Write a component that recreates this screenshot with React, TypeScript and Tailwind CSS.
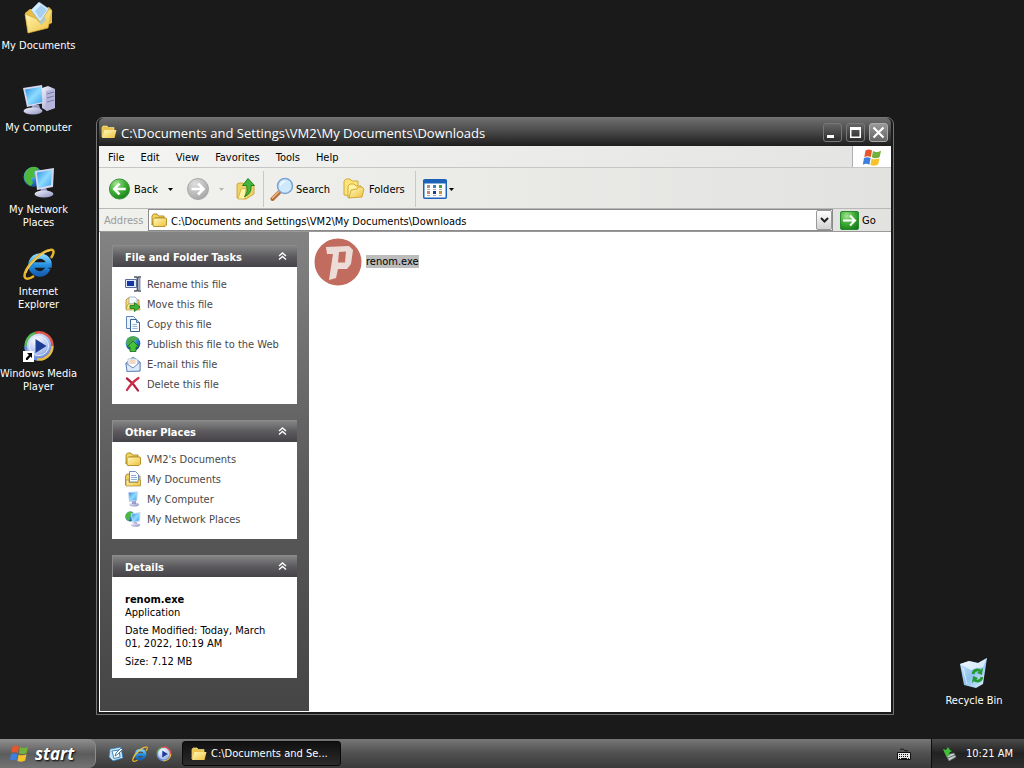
import type { ReactNode } from "react";

type IconProps = { className?: string };

type Item = {
  label: string;
  icon: ReactNode;
};

/* Gradients shared by all icons */
function IconDefs() {
  return (
    <svg className="absolute h-0 w-0" aria-hidden="true">
      <defs>
        <linearGradient id="folder" x1="0" y1="0" x2="1" y2="1">
          <stop offset="0" stopColor="#fffbc0" />
          <stop offset="1" stopColor="#eec03a" />
        </linearGradient>
        <linearGradient id="screen" x1="0" y1="0" x2="1" y2="1">
          <stop offset="0" stopColor="#2a8fe8" />
          <stop offset="0.5" stopColor="#8fdcff" />
          <stop offset="1" stopColor="#3aa0ec" />
        </linearGradient>
        <linearGradient id="metal" x1="0" y1="0" x2="1" y2="1">
          <stop offset="0" stopColor="#f4f4ff" />
          <stop offset="1" stopColor="#8d8fbe" />
        </linearGradient>
        <radialGradient id="globe" cx="0.35" cy="0.3" r="0.8">
          <stop offset="0" stopColor="#9be8ff" />
          <stop offset="0.5" stopColor="#2f86d8" />
          <stop offset="1" stopColor="#0d3c86" />
        </radialGradient>
        <radialGradient id="green" cx="0.35" cy="0.25" r="0.85">
          <stop offset="0" stopColor="#a4e693" />
          <stop offset="0.5" stopColor="#3fae35" />
          <stop offset="1" stopColor="#157a18" />
        </radialGradient>
        <radialGradient id="gray" cx="0.35" cy="0.25" r="0.85">
          <stop offset="0" stopColor="#dedede" />
          <stop offset="1" stopColor="#a2a2a2" />
        </radialGradient>
        <linearGradient id="ie" x1="0" y1="0" x2="0" y2="1">
          <stop offset="0" stopColor="#7fd4ff" />
          <stop offset="0.5" stopColor="#2590e0" />
          <stop offset="1" stopColor="#1762b8" />
        </linearGradient>
        <radialGradient id="disc" cx="0.4" cy="0.3" r="0.8">
          <stop offset="0" stopColor="#ffffff" />
          <stop offset="0.6" stopColor="#a9c0f0" />
          <stop offset="1" stopColor="#4a68c0" />
        </radialGradient>
        <linearGradient id="bin" x1="0" y1="0" x2="1" y2="1">
          <stop offset="0" stopColor="#cfeaff" />
          <stop offset="0.5" stopColor="#8fc2ef" />
          <stop offset="1" stopColor="#e4f5ff" />
        </linearGradient>
      </defs>
    </svg>
  );
}

function FolderIcon({ className = "h-4 w-4" }: IconProps) {
  return (
    <svg viewBox="0 0 16 16" className={className}>
      <path d="M1 13V4l1.5-2H6l1.5 2H13v2H4z" fill="#f2d560" stroke="#a98518" strokeWidth=".9" />
      <path d="M2 14V7.5L3.5 6H15l.5 1v6L14 14.5H3z" fill="url(#folder)" stroke="#b08a1c" strokeWidth=".9" />
    </svg>
  );
}

function OpenFolderIcon({ className = "h-4 w-4" }: IconProps) {
  return (
    <svg viewBox="0 0 16 14" className={className}>
      <path d="M1 12V2.500L2 1h4l1.500 1.500H13V6H4z" fill="#e9c34c" stroke="#f7e28c" strokeWidth=".7" />
      <path d="M1 13 3.500 5H15.500L13.500 13z" fill="url(#folder)" />
    </svg>
  );
}

function DocumentsIcon({ className = "h-8 w-8" }: IconProps) {
  return (
    <svg viewBox="0 0 32 32" className={className}>
      <path d="M2 11 7 7h5l2 3 12-5 3 3v13L5 31z" fill="#e8bd45" />
      <path d="M8 8 16 0l10 7-8 14z" fill="#d9edfb" stroke="#86b4dc" strokeWidth=".7" />
      <path d="m12 9 6-6 6 5-7 9z" fill="#8fc3ec" opacity=".7" />
      <path d="M2 12 14 17l2 3 2-1 8-12 3 2-4 17L5 31z" fill="url(#folder)" stroke="#d9a92e" strokeWidth=".7" />
      <path d="m16 20 2-1 3-5 2 4-5 5z" fill="#8fc3ec" opacity=".7" />
    </svg>
  );
}

function ComputerIcon({ className = "h-8 w-8" }: IconProps) {
  return (
    <svg viewBox="0 0 32 32" className={className}>
      <path d="m19 4 6-2 7 3v19l-8 3-5-3z" fill="url(#metal)" />
      <path d="M23 7v20l9-3V5z" fill="#b4b5d8" />
      <path d="m24 10 7-2M24 14l7-2M24 18l7-2" stroke="#777aa8" strokeWidth="1" />
      <path d="M9 21h7l2 6H8z" fill="#9a9cc6" />
      <ellipse cx="10" cy="27" rx="9.500" ry="3.500" fill="url(#metal)" />
      <path d="m0 4 19-3 2 18-17 4z" fill="#d4d8f0" />
      <path d="m2 5.500 16-2.500 1.500 15L5.500 21z" fill="url(#screen)" />
    </svg>
  );
}

function NetworkIcon({ className = "h-8 w-8" }: IconProps) {
  return (
    <svg viewBox="0 0 32 32" className={className}>
      <circle cx="10.500" cy="11" r="10" fill="url(#globe)" />
      <path d="M4 4c4-4 9-4 12-1l-5 3 1 5-4 1 2 5-2 3C1 17-1 10 4 4z" fill="#4db83c" />
      <path d="M18 22h5l3 6h-9z" fill="#9a9cc6" />
      <ellipse cx="21" cy="28" rx="9.500" ry="3.500" fill="url(#metal)" />
      <path d="m12 5 19-3-1 19-16 3z" fill="#d4d8f0" />
      <path d="m14 6.500 15-2.500-1 15-12.500 3z" fill="url(#screen)" />
    </svg>
  );
}

function ExplorerIcon({ className = "h-8 w-8" }: IconProps) {
  return (
    <svg viewBox="0 0 32 32" className={className} fill="none">
      <path d="M25 20c-2 4-4 6-8 6-5 0-9-4-9-9s4-9 9-9 9 4 9 8v1H11" stroke="url(#ie)" strokeWidth="5.500" />
      <path d="M28 10c4-6 3-9-1-8C19 3 5 16 2 25c-2 7 3 7 9 3" stroke="#e7b52c" strokeWidth="2.500" />
      <path d="M27 2.500C19 4 6 16 3 25" stroke="#fbe58b" strokeWidth=".8" />
    </svg>
  );
}

function MediaIcon({ className = "h-8 w-8" }: IconProps) {
  return (
    <svg viewBox="0 0 32 32" className={className} fill="none">
      <circle cx="16" cy="16" r="13" fill="url(#disc)" />
      <path d="M2.500 16A13.500 13.500 0 0 1 12 3" stroke="#58b958" strokeWidth="2.500" />
      <path d="M12 3A13.500 13.500 0 0 1 29.500 16" stroke="#e0564a" strokeWidth="2.500" />
      <path d="M29.500 16A13.500 13.500 0 0 1 14 29.400" stroke="#e8bd45" strokeWidth="2.500" />
      <path d="M14 29.400A13.500 13.500 0 0 1 2.500 16" stroke="#6d92e0" strokeWidth="2.500" />
      <circle cx="16" cy="16" r="9.500" stroke="#e9f1ff" />
      <path d="M12.500 9v14l11-7z" fill="#1c3d94" />
    </svg>
  );
}

function ShortcutIcon({ className = "h-8 w-8" }: IconProps) {
  return (
    <span className="relative block">
      <MediaIcon className={className} />
      <svg viewBox="0 0 11 11" className="absolute bottom-0 left-0 h-[11px] w-[11px]">
        <path d="M0 0h11v11H0z" fill="#fff" />
        <path d="M4 2h5v5L7.500 5.500 4.500 9H3V7l3-3z" fill="#000" />
      </svg>
    </span>
  );
}

function RecycleIcon({ className = "h-8 w-8" }: IconProps) {
  return (
    <svg viewBox="0 0 32 32" className={className}>
      <path d="m2 7 9-3 9 2 9-5-4 26-7 4-12-3z" fill="url(#bin)" />
      <path d="m2 7 9-3 9 2 9-5-4 9-12 3z" fill="#fff" opacity=".65" />
      <path d="m5 11 4 16" stroke="#fff" opacity=".6" />
      <g fill="none" stroke="#249a32" strokeWidth="2.800">
        <path d="M15 17c1-5 6-5 8-2" />
        <path d="M24 20c-1 5-6 5-8 2" />
      </g>
      <path d="m25 11-1 7-5-2zM14 26l1-7 5 2z" fill="#249a32" />
    </svg>
  );
}

function WindowsLogo({ className = "h-5 w-5" }: IconProps) {
  return (
    <svg viewBox="0 0 20 20" className={className}>
      <path d="M3.500 2.500C6 1 8 1.300 10 2.500L8.800 9C6.500 7.800 4.500 8 2.300 9z" fill="#e5562d" />
      <path d="M11 3c2.500 1.300 5 1.300 8-.3L17.700 9c-2.500 1.500-5 1.500-7.900.3z" fill="#73b13a" />
      <path d="M2 10c2.500-1.300 4.500-1 6.600.1l-1.200 6.600c-2.300-1.200-4.300-1-6.600 0z" fill="#3d7fdc" />
      <path d="M9.600 10.400c2.500 1.200 5 1.200 7.900-.2l-1.300 6.400c-2.600 1.500-5 1.400-7.800.3z" fill="#f6c22c" />
    </svg>
  );
}

function ArrowCircle({ kind }: { kind: "back" | "forward" }) {
  return (
    <svg viewBox="0 0 24 24" className="h-6 w-6" fill="none">
      <circle
        cx="12"
        cy="12"
        r="10.500"
        fill={kind === "back" ? "url(#green)" : "url(#gray)"}
        stroke={kind === "back" ? "#33913a" : "#a8a8a8"}
      />
      <path
        d={kind === "back" ? "M18.500 12H7M12 6.500 6.500 12l5.500 5.500" : "M5.500 12H17M12 6.500l5.500 5.500-5.500 5.500"}
        stroke="#fff"
        strokeWidth="2.600"
      />
    </svg>
  );
}

function UpIcon() {
  return (
    <svg viewBox="0 0 22 24" className="h-6 w-[22px]">
      <path d="M2 21V7l2-1h4l2 2h9v9l-8 5z" fill="#efd365" stroke="#c49d2b" strokeWidth=".8" />
      <path d="M3 22 6 12l5-1-1 11z" fill="#fff4a8" stroke="#d1a935" strokeWidth=".8" />
      <path d="M13 1.500 19.500 8.500H16c.5 6-1.500 9-6.500 11 3-4 3-6 2-11H7.500z" fill="#46b43a" stroke="#1d7c1d" strokeWidth=".9" />
    </svg>
  );
}

function SearchIcon() {
  return (
    <svg viewBox="0 0 24 24" className="h-6 w-6">
      <path d="m2.500 22 8-8" stroke="#b5703a" strokeWidth="4" strokeLinecap="round" />
      <path d="m2.500 21 7.500-7.500" stroke="#eab98a" strokeWidth="1.500" strokeLinecap="round" />
      <circle cx="15" cy="9" r="7.500" fill="#cfe9fc" stroke="#7da4d4" strokeWidth="1.600" />
      <path d="M10 9c0-4 3-5.500 6-5-3 1-4 3-6 5z" fill="#fff" />
    </svg>
  );
}

function FoldersIcon() {
  return (
    <svg viewBox="0 0 24 22" className="h-[22px] w-6" stroke="#cda22b" strokeWidth=".9">
      <path d="M2 17V3l2-2h4l2 2h6v4L8 18z" fill="#fbe57a" />
      <path d="M6 20V8l2-2h4l2 2h5v4z" fill="#fff3a4" />
      <path d="m7 20 2-8 6-1 1-2h4l2 2-2 8z" fill="url(#folder)" />
    </svg>
  );
}

function ViewsIcon() {
  return (
    <svg viewBox="0 0 24 20" className="h-5 w-6">
      <rect x=".75" y=".75" width="22.500" height="18.500" rx="1" fill="#fff" stroke="#1c62b8" strokeWidth="1.500" />
      <path d="M0 1h24v3.500H0z" fill="#1c62b8" />
      <g>
        <path d="M4 6h3v3H4z" fill="#a89088" />
        <path d="M10 6h3v3h-3z" fill="#3e84b4" />
        <path d="M16 6h3v3h-3z" fill="#3ea040" />
        <path d="M4 12h3v3H4z" fill="#d0806c" />
        <path d="M10 12h3v3h-3z" fill="#1c3d94" />
        <path d="M16 12h3v3h-3z" fill="#c29335" />
      </g>
      <path d="M4 10.500h3m3 0h3m3 0h3M4 16.500h3m3 0h3m3 0h3" stroke="#aaa" />
    </svg>
  );
}

function Caret({ className = "fill-black" }: IconProps) {
  return (
    <svg viewBox="0 0 5 3" className={`h-[3px] w-[5px] ${className}`}>
      <path d="M0 0h5L2.500 3z" />
    </svg>
  );
}

function RenameIcon() {
  return (
    <svg viewBox="0 0 16 16" className="h-4 w-4">
      <path d="M.5 3.500h11v8H.5z" fill="#dfe8f8" stroke="#5a6f9c" />
      <path d="M2 5h7v5H2z" fill="#1535a0" />
      <path d="M14.500 2v12" stroke="#8d9ab0" strokeWidth="2" />
      <path d="M9 1h2.500l1 1 1-1H16M12.500 2v12M9 15h2.500l1-1 1 1H16" fill="none" stroke="#4c5668" strokeWidth="1.600" />
    </svg>
  );
}

function MoveIcon() {
  return (
    <svg viewBox="0 0 16 16" className="h-4 w-4">
      <path d="M1 13V4l2-2h4l1 2h6v9z" fill="#f4dc7a" stroke="#a8882c" strokeWidth=".8" />
      <path d="M4 1h6l2 2v5H4z" fill="#f5f9ff" stroke="#8aa0bc" strokeWidth=".7" />
      <path d="M1 14 3 8h11l1 6z" fill="url(#folder)" stroke="#a8882c" strokeWidth=".6" />
      <path d="M5 9.500h4.500V6.500L15 11l-5.500 4.500v-3H5z" fill="#3eb232" stroke="#157516" strokeWidth=".8" />
    </svg>
  );
}

function CopyIcon() {
  return (
    <svg viewBox="0 0 16 16" className="h-4 w-4">
      <path d="M1.500.5h7l2 2v10h-9z" fill="#e8f2fc" stroke="#5f86b4" />
      <path d="M5.500 3.500h6l3 3v9h-9z" fill="#f8fbff" stroke="#35618f" />
      <path d="M11.500 3.500v3h3" fill="#bcd4ee" stroke="#35618f" strokeWidth=".8" />
      <path d="M7.500 8.500H12M7.500 10.500h5M7.500 12.500h5" stroke="#94b4d8" />
    </svg>
  );
}

function PublishIcon() {
  return (
    <svg viewBox="0 0 16 16" className="h-4 w-4">
      <circle cx="8" cy="7.500" r="7.300" fill="url(#globe)" />
      <path d="M2 3c4-4 9-3 12 0l-4 1-1 3H5L4 10 1 8z" fill="#4aa84e" />
      <path d="m8 5 6 6h-3v4.500H5V11H2z" fill="#45c235" stroke="#146a18" strokeWidth=".8" />
    </svg>
  );
}

function EmailIcon() {
  return (
    <svg viewBox="0 0 16 16" className="h-4 w-4">
      <path d="M1 7 8 1l7 5v9l-13 .500z" fill="#bed4ef" stroke="#6485b4" strokeWidth=".9" />
      <path d="M3 3h9l1 6-5 3-5-3z" fill="#fff" stroke="#a8b4c8" strokeWidth=".7" />
      <path d="M4.500 5h6M4.500 7h6" stroke="#e3a17c" strokeWidth=".9" />
      <path d="m1 7 7 5 7-6v9l-13 .500z" fill="#dbe9f9" stroke="#6485b4" strokeWidth=".9" />
    </svg>
  );
}

function DeleteIcon() {
  return (
    <svg viewBox="0 0 16 16" className="h-4 w-4" fill="none" strokeLinecap="round">
      <path d="M2 2.500c4 3 8 7 11 12" stroke="#b81c3c" strokeWidth="2.200" />
      <path d="M13.500 2C9 5 5 9 2 14" stroke="#d22c4c" strokeWidth="2.200" />
    </svg>
  );
}

function DocFolderIcon() {
  return (
    <svg viewBox="0 0 16 16" className="h-4 w-4">
      <path d="M.5 14V5L2 3h3l1 2h9v9z" fill="#f0d060" stroke="#a8882c" strokeWidth=".9" />
      <path d="M4.500.5h6l3 3V11h-9z" fill="#f8fbff" stroke="#6485b4" strokeWidth=".9" />
      <path d="M6 4.500h5M6 6.500h6M6 8.500h6" stroke="#8cb0dc" />
      <path d="M1 15V9h3v2.500h9V9h2.500v6z" fill="url(#folder)" stroke="#a8882c" strokeWidth=".7" />
    </svg>
  );
}

function SmallComputerIcon() {
  return (
    <svg viewBox="0 0 16 16" className="h-4 w-4">
      <ellipse cx="9" cy="13.500" rx="5" ry="2" fill="url(#metal)" />
      <path d="M7 10h4v3H7z" fill="#9a9cc6" />
      <path d="m3 1 10-.500L12 10l-8 1z" fill="#c4cdec" />
      <path d="m4 2 8-.500L11.200 9l-6.400.8z" fill="url(#screen)" />
    </svg>
  );
}

function DesktopLaunchIcon() {
  return (
    <svg viewBox="0 0 16 16" className="h-4 w-4">
      <path d="m2 3 11-2 2 11-10 3-4-4z" fill="#c4e4f6" stroke="#2f78ac" strokeWidth=".8" />
      <path d="m4 5 7-1 1 7-6 1.500z" fill="#fff" stroke="#3d86bc" />
      <path d="m7 10 1-3 5-5 1.500 1.500-5 5z" fill="#f5fbff" stroke="#28618f" strokeWidth=".8" />
    </svg>
  );
}

function KeyboardIcon() {
  return (
    <svg viewBox="0 0 16 14" className="h-[14px] w-4">
      <path d="M4 2c2 1 3-1 4 1s3 0 4 1" fill="none" stroke="#111" />
      <path d="M1.500 5.500h13v7h-13z" fill="#e8e8e8" stroke="#111" />
      <path d="M3 7.500h10M3 9.500h10" stroke="#111" strokeDasharray="1 1" />
      <path d="M3 11.500h1m1 0h6m1 0h1" stroke="#111" />
    </svg>
  );
}

function TrayIcon() {
  return (
    <svg viewBox="0 0 16 16" className="h-4 w-4">
      <path d="m4 9 8-2 2 4-7 4z" fill="#c8cfd0" stroke="#5d6a68" strokeWidth=".8" />
      <path d="m6 12 7-3" stroke="#5c6866" />
      <path d="m1 3 3 1 2-3 2 3 2 1-3 2 1 2-3 2-2-3z" fill="#41bd3b" />
    </svg>
  );
}

function AppIcon() {
  return (
    <svg viewBox="0 0 48 48" className="h-12 w-12">
      <circle cx="24" cy="24" r="23.500" fill="#c26c60" />
      <path d="M12 9 35 8l4 4-2 14-4 5h-9l-2 9-7 2 4-26h-6z" fill="#ecdcd8" />
      <path d="m25 14 7-.500-1 11h-7z" fill="#c26c60" />
    </svg>
  );
}

function DesktopItem({ label, icon }: Item) {
  return (
    <button className="flex h-[82px] w-full flex-col items-center gap-[5px] whitespace-pre text-center text-white">
      {icon}
      <span>{label}</span>
    </button>
  );
}

function Panel({ title, children }: { title: string; children: ReactNode }) {
  return (
    <section className="bg-white">
      <button className="flex h-[22px] w-full items-center justify-between border-l border-t border-[#8b8b8b] bg-linear-to-b from-[#858585] via-[#5c5a5e] to-[#454347] pl-3 pr-2.5 pt-px font-bold text-white">
        <span>{title}</span>
        <svg viewBox="0 0 9 8" className="mb-0.5 h-2 w-[9px]" fill="none" stroke="#fff" strokeWidth="1.400">
          <path d="m1 4 3.500-3L8 4M1 7.500l3.500-3 3.500 3" />
        </svg>
      </button>
      {children}
    </section>
  );
}

function LinkList({ items }: { items: Item[] }) {
  return (
    <ul className="px-[13px] pb-2.5 pt-[7px]">
      {items.map((item) => (
        <li key={item.label}>
          <a href="#" className="flex h-5 items-center gap-1.5 whitespace-nowrap text-[#484848]">
            {item.icon}
            {item.label}
          </a>
        </li>
      ))}
    </ul>
  );
}

const DESKTOP_ITEMS: Item[] = [
  { label: "My Documents", icon: <DocumentsIcon /> },
  { label: "My Computer", icon: <ComputerIcon /> },
  { label: "My Network\nPlaces", icon: <NetworkIcon /> },
  { label: "Internet\nExplorer", icon: <ExplorerIcon /> },
  { label: "Windows Media\nPlayer", icon: <ShortcutIcon /> },
];

const MENUS = ["File", "Edit", "View", "Favorites", "Tools", "Help"];

const FILE_TASKS: Item[] = [
  { label: "Rename this file", icon: <RenameIcon /> },
  { label: "Move this file", icon: <MoveIcon /> },
  { label: "Copy this file", icon: <CopyIcon /> },
  { label: "Publish this file to the Web", icon: <PublishIcon /> },
  { label: "E-mail this file", icon: <EmailIcon /> },
  { label: "Delete this file", icon: <DeleteIcon /> },
];

const PLACES: Item[] = [
  { label: "VM2's Documents", icon: <FolderIcon /> },
  { label: "My Documents", icon: <DocFolderIcon /> },
  { label: "My Computer", icon: <SmallComputerIcon /> },
  { label: "My Network Places", icon: <NetworkIcon className="h-4 w-4" /> },
];

const PATH = "C:\\Documents and Settings\\VM2\\My Documents\\Downloads";

const TITLE_BUTTON =
  "flex h-[19px] w-[19px] items-center justify-center rounded-[3px] border border-[#777] bg-linear-to-b from-[#666] to-[#2c2c2c]";

function TitleBar() {
  return (
    <header className="flex h-7 items-center gap-1 rounded-t-[5px] bg-linear-to-b from-[#6e6e6e] via-[#484848] to-[#1e1e1e] pl-0.5 pr-[3px]">
      <OpenFolderIcon />
      <h1 className="min-w-0 flex-1 truncate pt-px font-['Open_Sans','Noto_Sans',sans-serif] text-[13px] font-medium leading-5 text-white">
        {PATH}
      </h1>
      <div className="flex gap-1">
        <button aria-label="Minimize" className={TITLE_BUTTON}>
          <svg viewBox="0 0 13 13" className="h-[13px] w-[13px]">
            <path d="M1 9h7v3H1z" fill="#fff" />
          </svg>
        </button>
        <button aria-label="Maximize" className={TITLE_BUTTON}>
          <svg viewBox="0 0 13 13" className="h-[13px] w-[13px]">
            <path d="M1 1h11v11H1zM2.500 4v6.500h8V4z" fill="#fff" fillRule="evenodd" />
          </svg>
        </button>
        <button
          aria-label="Close"
          className="flex h-[19px] w-[19px] items-center justify-center rounded-[3px] border border-[#aaa] bg-linear-to-b from-[#999] to-[#666]"
        >
          <svg viewBox="0 0 13 13" className="h-[13px] w-[13px]">
            <path d="m1.500 1.500 10 10m0-10-10 10" stroke="#fff" strokeWidth="2.200" />
          </svg>
        </button>
      </div>
    </header>
  );
}

function Toolbar() {
  return (
    <div className="flex h-[41px] items-center border-b border-[#b8b8b6] bg-linear-to-r from-[#f2f2ef] to-[#e2e2e0] pl-[9px] pt-0.5">
      <button className="flex w-[50px] items-center gap-[3px]">
        <ArrowCircle kind="back" />
        Back
      </button>
      <button aria-label="Back history" className="flex h-6 w-7 items-center justify-center pr-1">
        <Caret />
      </button>
      <button aria-label="Forward" disabled>
        <ArrowCircle kind="forward" />
      </button>
      <button aria-label="Forward history" disabled className="flex h-6 w-[25px] items-center justify-center pr-0.5">
        <Caret className="fill-[#b5b5b5]" />
      </button>
      <button aria-label="Up">
        <UpIcon />
      </button>
      <span className="ml-1.5 h-9 w-px bg-[#c8c8c6]" />
      <button className="ml-1.5 flex w-[68px] items-center gap-0.5">
        <SearchIcon />
        Search
      </button>
      <button className="ml-1 flex w-[67px] items-center gap-[3px]">
        <FoldersIcon />
        Folders
      </button>
      <span className="ml-1.5 h-9 w-px bg-[#c8c8c6]" />
      <button aria-label="Views" className="ml-[7px] flex items-center gap-0.5">
        <ViewsIcon />
        <Caret />
      </button>
    </div>
  );
}

function AddressBar() {
  return (
    <form
      className="flex h-[23px] items-center border-b border-[#999] bg-linear-to-r from-[#f0f0ed] to-[#e2e2e0] pl-[5px]"
      onSubmit={(e) => e.preventDefault()}
    >
      <label htmlFor="address" className="w-11 pt-px text-[#9b9b99]">
        Address
      </label>
      <div className="flex h-[22px] min-w-0 flex-1 items-center gap-1 border border-[#8a8a8a] bg-white pl-0.5">
        <FolderIcon />
        <input id="address" defaultValue={PATH} className="min-w-0 flex-1 bg-transparent pt-0.5 outline-none" />
        <button
          type="button"
          aria-label="Show addresses"
          className="flex h-5 w-4 items-center justify-center rounded-[2px] border border-[#999] bg-linear-to-b from-white to-[#d2d2d2]"
        >
          <svg viewBox="0 0 9 6" className="h-1.5 w-[9px]" fill="none" stroke="#222" strokeWidth="2">
            <path d="m1 1 3.500 3.500L8 1" />
          </svg>
        </button>
      </div>
      <button className="ml-[7px] flex w-[51px] items-center gap-[3px] pt-px">
        <svg viewBox="0 0 19 19" className="h-[19px] w-[19px]">
          <rect x=".5" y=".5" width="18" height="18" rx="1.500" fill="url(#green)" stroke="#2a8a30" />
          <path d="M3 9.500h12M10 4.500l5 5-5 5" fill="none" stroke="#fff" strokeWidth="2" />
        </svg>
        Go
      </button>
    </form>
  );
}

function ExplorerWindow() {
  return (
    <main className="absolute bottom-6 left-24 right-[130px] top-[117px] flex flex-col rounded-t-[7px] border border-[#747474] bg-[#1b1b1d] px-0.5 pb-0.5">
      <TitleBar />
      <nav className="flex h-[22px] items-stretch border-b border-[#c6c6c4] bg-linear-to-r from-[#f4f5f2] to-[#e4e4e2] pl-px">
        {MENUS.map((menu) => (
          <button key={menu} className="px-2 pt-px">
            {menu}
          </button>
        ))}
        <span className="ml-auto flex w-[39px] items-center justify-center border-l border-[#b0b0b0] bg-white pt-0.5">
          <WindowsLogo />
        </span>
      </nav>
      <Toolbar />
      <AddressBar />
      <div className="flex min-h-0 flex-1 bg-white">
        <aside className="mb-px ml-px flex w-[209px] flex-col gap-4 overflow-hidden bg-linear-to-b from-[#838383] via-[#5c5c5c] to-[#454545] px-3 pt-[13px]">
          <Panel title="File and Folder Tasks">
            <LinkList items={FILE_TASKS} />
          </Panel>
          <Panel title="Other Places">
            <LinkList items={PLACES} />
          </Panel>
          <Panel title="Details">
            <div className="flex flex-col gap-[5px] px-[13px] pb-2.5 pt-4">
              <p>
                <b>renom.exe</b>
                <br />
                Application
              </p>
              <p>Date Modified: Today, March 01, 2022, 10:19 AM</p>
              <p>Size: 7.12 MB</p>
            </div>
          </Panel>
        </aside>
        <div className="flex-1 pl-[5px] pt-1.5">
          <button className="flex items-center gap-1">
            <AppIcon />
            <span className="mb-0.5 bg-[#bcbcbc]">renom.exe</span>
          </button>
        </div>
      </div>
    </main>
  );
}

function Taskbar() {
  return (
    <footer className="flex h-[29px] items-stretch bg-linear-to-b from-[#777] via-[#505050] to-[#3a3a3a] text-white">
      <button className="flex w-24 items-center gap-1.5 rounded-r-[8px] border-r border-t border-[#8d8d8d] bg-linear-to-b from-[#8c8c8c] via-[#5c5c5c] to-[#747474] pl-[9px]">
        <WindowsLogo />
        <span className="font-['Open_Sans','Noto_Sans',sans-serif] text-[17px] font-bold italic leading-5 [text-shadow:1px_1px_2px_#000]">
          start
        </span>
      </button>
      <div className="ml-3 flex items-center gap-2">
        <button aria-label="Show Desktop">
          <DesktopLaunchIcon />
        </button>
        <button aria-label="Internet Explorer">
          <ExplorerIcon className="h-4 w-4" />
        </button>
        <button aria-label="Windows Media Player">
          <MediaIcon className="h-4 w-4" />
        </button>
      </div>
      <button className="my-0.5 ml-2.5 flex w-[159px] items-center gap-1 rounded-[3px] border border-[#090909] bg-linear-to-b from-[#101010] to-[#2b2b2b] pl-2">
        <OpenFolderIcon />
        <span>C:\Documents and Se...</span>
      </button>
      <button aria-label="Keyboard" className="ml-auto mr-[19px]">
        <KeyboardIcon />
      </button>
      <div className="flex w-[93px] items-center gap-2 border-l border-[#0c0c0c] bg-linear-to-b from-[#4c4c4c] via-[#222] to-[#303030] pl-2.5">
        <TrayIcon />
        <time className="whitespace-nowrap">10:21 AM</time>
      </div>
    </footer>
  );
}

export default function App() {
  return (
    <div className="flex h-screen min-h-[720px] flex-col bg-[#1a1a1a] font-['DejaVu_Sans_Condensed','DejaVu_Sans',sans-serif] text-[11px] leading-[13px] text-black">
      <IconDefs />
      <div className="relative flex flex-1 items-start justify-between pt-0.5">
        <div className="w-[77px]">
          {DESKTOP_ITEMS.map((item) => (
            <DesktopItem key={item.label} {...item} />
          ))}
        </div>
        <div className="w-[100px] self-end">
          <DesktopItem label="Recycle Bin" icon={<RecycleIcon />} />
        </div>
        <ExplorerWindow />
      </div>
      <Taskbar />
    </div>
  );
}
